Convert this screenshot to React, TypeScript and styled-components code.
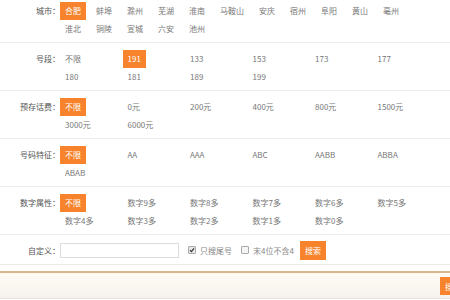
import React from "react";
import styled, { createGlobalStyle } from "styled-components";

const orange = "#f7842c";

const GlobalStyle = createGlobalStyle`
  html, body {
    margin: 0;
    padding: 0;
    background: #fff;
    overflow: hidden;
  }
  body {
    font-family: "Noto Sans CJK SC", "Noto Sans", sans-serif;
    font-size: 8px;
    color: #777;
  }
`;

const Page = styled.div`
  width: 450px;
  height: 300px;
  overflow: hidden;
`;

const Row = styled.div<{ $top?: number }>`
  display: flex;
  align-items: flex-start;
  padding: ${({ $top }) => $top ?? 7}px 0 4px;
  border-bottom: 1px solid #ececec;
  line-height: 18px;
`;

const Label = styled.div`
  width: 60px;
  flex: none;
  text-align: right;
  color: #555;
`;

const Options = styled.div`
  display: flex;
  flex-wrap: wrap;
  width: 376px;
`;

const Cell = styled.div`
  width: 62.5px;
  height: 18px;
`;

const Option = styled.span<{ $active?: boolean }>`
  display: inline-block;
  height: 18px;
  padding: 0 5px;
  color: ${({ $active }) => ($active ? "#fff" : "#777")};
  background: ${({ $active }) => ($active ? orange : "transparent")};
`;

const CityOption = styled(Option)`
  margin-right: 5px;
`;

const CustomRow = styled.div`
  display: flex;
  align-items: center;
  height: 20px;
  padding: 5px 0 4px;
  border-bottom: 1px solid #ececec;
`;

const TextInput = styled.input`
  box-sizing: border-box;
  width: 119px;
  height: 15px;
  margin: 0;
  border: 1px solid #dcdcdc;
  outline: none;
`;

const Check = styled.label`
  display: flex;
  align-items: center;
  gap: 4px;
  margin-left: 9px;
  color: #888;
`;

const Box = styled.span<{ $checked?: boolean }>`
  box-sizing: border-box;
  width: 8px;
  height: 8px;
  border: 1px solid #aaa;
  border-radius: 1px;
  background: ${({ $checked }) => ($checked ? "#e8e8e8" : "#f4f4f4")};
  display: flex;
  align-items: center;
  justify-content: center;
`;

const SearchButton = styled.button`
  height: 19px;
  padding: 0 5px;
  margin-left: 6px;
  border: none;
  background: ${orange};
  color: #fff;
  font-family: inherit;
  font-size: 8px;
`;

const Footer = styled.div`
  margin-top: 6px;
  height: 24px;
  border-top: 2px solid #dab58c;
  border-bottom: 1px solid #e2e2e2;
  background: linear-gradient(#fffaf2, #f6f3ef);
  display: flex;
  justify-content: flex-end;
  align-items: center;
  padding-top: 1px;
`;

const FooterButton = styled(SearchButton)`
  height: 18px;
  margin-right: -16px;
  margin-left: 0;
`;

const cities = [
  "合肥", "蚌埠", "滁州", "芜湖", "淮南", "马鞍山", "安庆", "宿州", "阜阳", "黄山", "亳州",
  "淮北", "铜陵", "宣城", "六安", "池州",
];

const groups = [
  { label: "号段：", items: ["不限", "191", "133", "153", "173", "177", "180", "181", "189", "199"], active: "191" },
  { label: "预存话费：", items: ["不限", "0元", "200元", "400元", "800元", "1500元", "3000元", "6000元"], active: "不限" },
  { label: "号码特征：", items: ["不限", "AA", "AAA", "ABC", "AABB", "ABBA", "ABAB"], active: "不限" },
  {
    label: "数字属性：",
    items: ["不限", "数字9多", "数字8多", "数字7多", "数字6多", "数字5多", "数字4多", "数字3多", "数字2多", "数字1多", "数字0多"],
    active: "不限",
  },
];

const Tick = () => (
  <svg width="6" height="6" viewBox="0 0 6 6">
    <path d="M1 3.2 L2.4 4.6 L5 1.4" fill="none" stroke="#333" strokeWidth="1.2" />
  </svg>
);

export default function App() {
  return (
    <Page>
      <GlobalStyle />
      <Row $top={2}>
        <Label>城市：</Label>
        <Options>
          {cities.map((c) => (
            <CityOption key={c} $active={c === "合肥"}>
              {c}
            </CityOption>
          ))}
        </Options>
      </Row>
      {groups.map((g) => (
        <Row key={g.label}>
          <Label>{g.label}</Label>
          <Options>
            {g.items.map((item) => (
              <Cell key={item}>
                <Option $active={item === g.active}>{item}</Option>
              </Cell>
            ))}
          </Options>
        </Row>
      ))}
      <CustomRow>
        <Label>自定义：</Label>
        <TextInput />
        <Check>
          <Box $checked>
            <Tick />
          </Box>
          只搜尾号
        </Check>
        <Check>
          <Box />
          末4位不含4
        </Check>
        <SearchButton>搜索</SearchButton>
      </CustomRow>
      <Footer>
        <FooterButton>搜索</FooterButton>
      </Footer>
    </Page>
  );
}
